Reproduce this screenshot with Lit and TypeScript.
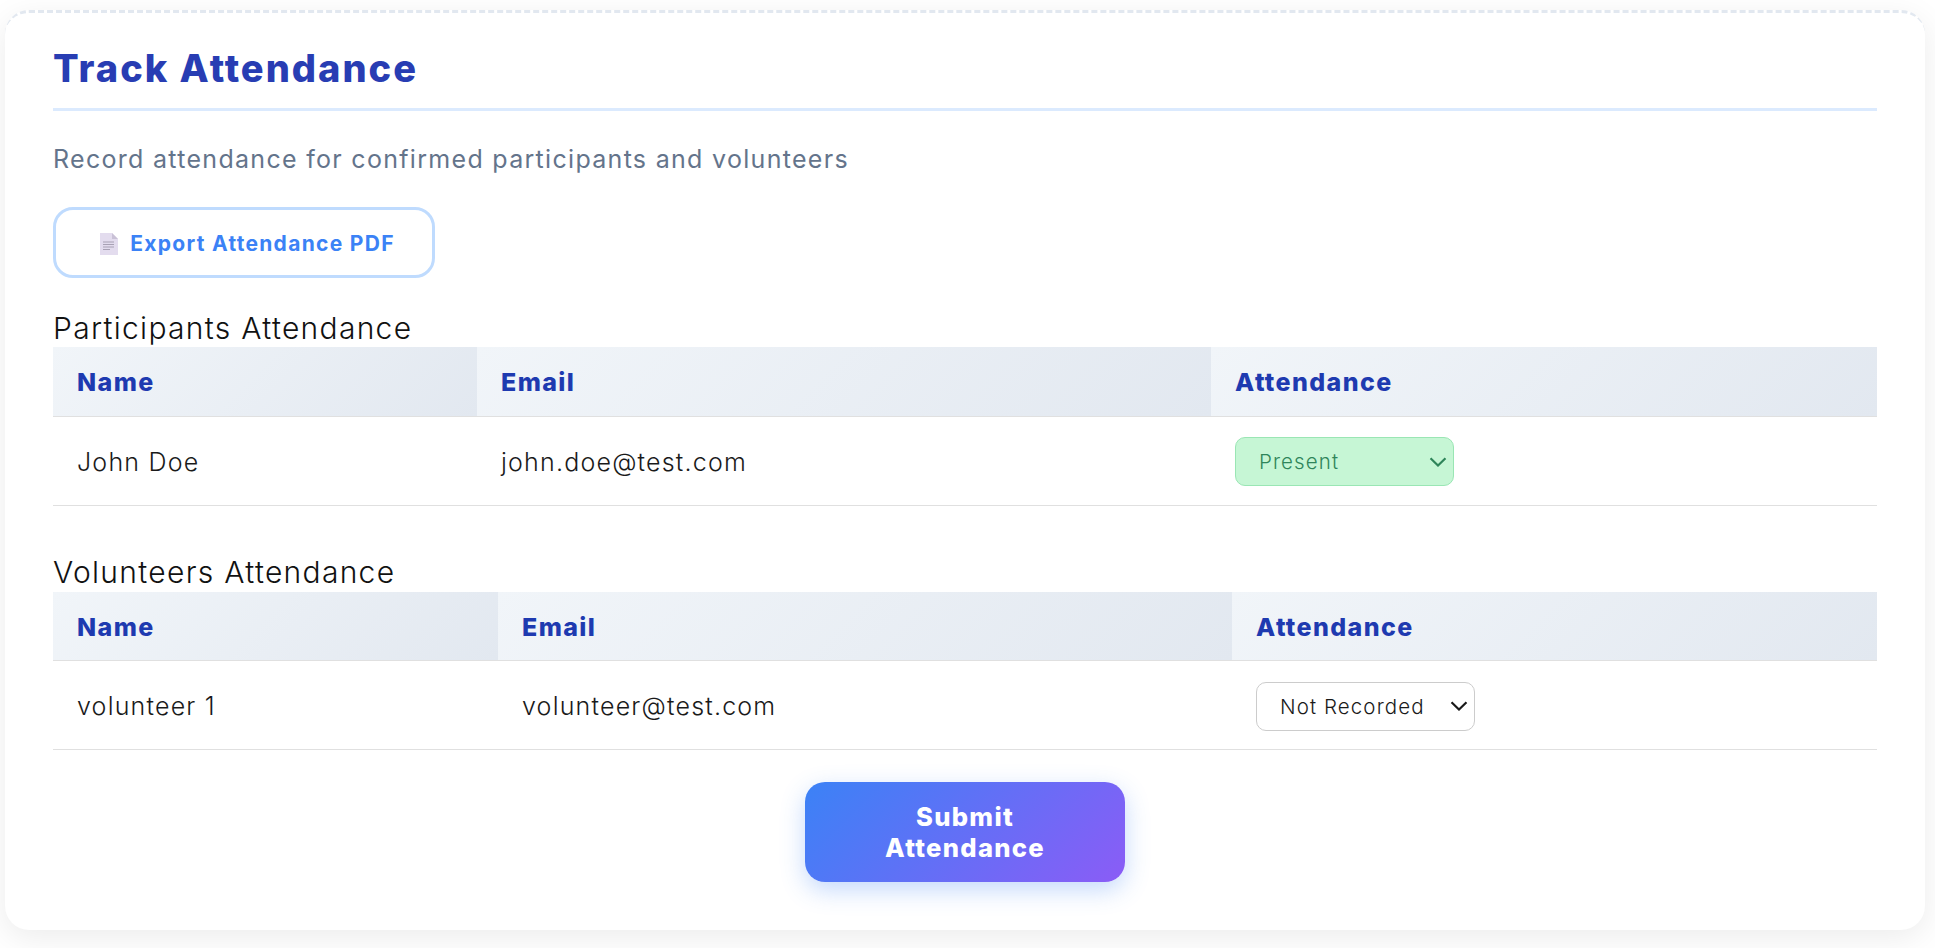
import { LitElement, css, html } from "lit";
import { customElement, state } from "lit/decorators.js";

type Person = { name: string; email: string; attendance: string };

const STATUS = ["Not Recorded", "Present", "Absent"];

@customElement("app-root")
export class AppRoot extends LitElement {
  static styles = css`
    * {
      box-sizing: border-box;
    }

    :host {
      display: block;
      padding: 10px 10px 18px 5px;
      background: #fff;
      font-family: Inter, "Liberation Sans", sans-serif;
      color: #1a1a1a;
    }

    .card {
      height: 920px;
      padding: 29px 48px 0;
      background: #fff;
      border-top: 3px dashed #e2e8f0;
      border-radius: 24px;
      box-shadow: 0 8px 32px rgba(0, 0, 0, 0.08);
    }

    h2 {
      margin: 0;
      height: 69px;
      border-bottom: 3px solid #dbeafe;
      font-size: 38px;
      line-height: 52px;
      font-weight: 800;
      color: #283db3;
      letter-spacing: 2px;
    }

    .sub {
      margin: 32px 0 0;
      height: 32px;
      font-size: 25px;
      line-height: 32px;
      letter-spacing: 1.3px;
      color: #64748b;
    }

    .export {
      display: flex;
      align-items: center;
      justify-content: center;
      gap: 12px;
      margin-top: 32px;
      width: 382px;
      height: 71px;
      padding: 2px 0 0 7px;
      background: #fff;
      border: 3px solid #bfdbfe;
      border-radius: 20px;
      font: inherit;
      font-size: 21px;
      letter-spacing: 1.3px;
      font-weight: 700;
      color: #3b82f6;
    }

    h3 {
      margin: 32px 0 0;
      height: 37px;
      font-size: 30px;
      line-height: 37px;
      letter-spacing: 1.3px;
      font-weight: 300;
      color: #111;
    }

    h3.second {
      margin-top: 48px;
      height: 38px;
    }

    table {
      width: 100%;
      border-collapse: collapse;
      table-layout: fixed;
    }

    th {
      height: 69px;
      padding: 2px 24px 0;
      text-align: left;
      font-size: 25px;
      letter-spacing: 1.4px;
      font-weight: 800;
      color: #1e3ab0;
      background: linear-gradient(135deg, #f1f5f9, #e2e8f0);
      border-bottom: 1px solid #e0e0e0;
    }

    td {
      height: 89px;
      padding: 2px 24px 0;
      font-size: 25px;
      letter-spacing: 1.2px;
      font-weight: 300;
      border-bottom: 1px solid #e0e0e0;
    }

    select {
      appearance: none;
      display: block;
      width: 219px;
      height: 49px;
      padding: 0 23px;
      font: inherit;
      font-size: 20.5px;
      letter-spacing: 1.1px;
      font-weight: 300;
      color: #1a1a1a;
      background: #fff
        url("data:image/svg+xml,%3Csvg xmlns='http://www.w3.org/2000/svg' width='18' height='10' viewBox='0 0 18 10'%3E%3Cpath d='M1.5 1.2L9 8.5l7.5-7.3' fill='none' stroke='%231a1a1a' stroke-width='2.2'/%3E%3C/svg%3E")
        no-repeat right 6px center;
      border: 1px solid #ccc;
      border-radius: 10px;
    }

    select.present {
      background: #c6f6d5
        url("data:image/svg+xml,%3Csvg xmlns='http://www.w3.org/2000/svg' width='18' height='10' viewBox='0 0 18 10'%3E%3Cpath d='M1.5 1.2L9 8.5l7.5-7.3' fill='none' stroke='%232f855a' stroke-width='2.2'/%3E%3C/svg%3E")
        no-repeat right 6px center;
      border-color: #9ae6b4;
      color: #2f855a;
    }

    .actions {
      display: flex;
      justify-content: center;
      margin-top: 32px;
    }

    .submit {
      width: 320px;
      height: 100px;
      padding: 0 48px;
      border: 0;
      border-radius: 20px;
      background: linear-gradient(135deg, #3b82f6, #8b5cf6);
      box-shadow: 0 8px 25px rgba(59, 130, 246, 0.3);
      font: inherit;
      font-size: 25.6px;
      line-height: 31px;
      letter-spacing: 1.3px;
      font-weight: 800;
      color: #fff;
    }
  `;

  @state() participants: Person[] = [
    { name: "John Doe", email: "john.doe@test.com", attendance: "Present" },
  ];

  @state() volunteers: Person[] = [
    { name: "volunteer 1", email: "volunteer@test.com", attendance: "Not Recorded" },
  ];

  private renderTable(rows: Person[], widths: number[]) {
    return html`
      <table>
        <colgroup>
          ${widths.map((w) => html`<col style="width:${w}px" />`)}
        </colgroup>
        <thead>
          <tr><th>Name</th><th>Email</th><th>Attendance</th></tr>
        </thead>
        <tbody>
          ${rows.map(
            (r) => html`
              <tr>
                <td>${r.name}</td>
                <td>${r.email}</td>
                <td>
                  <select class=${r.attendance === "Present" ? "present" : ""} .value=${r.attendance}>
                    ${STATUS.map((s) => html`<option ?selected=${s === r.attendance}>${s}</option>`)}
                  </select>
                </td>
              </tr>
            `,
          )}
        </tbody>
      </table>
    `;
  }

  render() {
    return html`
      <div class="card">
        <h2>Track Attendance</h2>
        <p class="sub">Record attendance for confirmed participants and volunteers</p>
        <button class="export">
          <svg width="18" height="22" viewBox="0 0 18 22">
            <path d="M0 0h12l6 6v16H0z" fill="#e3dcee" />
            <path d="M12 0l6 6h-6z" fill="#c9c1d6" />
            <path d="M3 9h11M3 11.5h11M3 14h11M3 16.5h7" stroke="#a8a1b4" stroke-width="1" />
          </svg>
          Export Attendance PDF
        </button>
        <h3>Participants Attendance</h3>
        ${this.renderTable(this.participants, [424, 734, 666])}
        <h3 class="second">Volunteers Attendance</h3>
        ${this.renderTable(this.volunteers, [445, 734, 645])}
        <div class="actions">
          <button class="submit">Submit Attendance</button>
        </div>
      </div>
    `;
  }
}

declare global {
  interface HTMLElementTagNameMap {
    "app-root": AppRoot;
  }
}
